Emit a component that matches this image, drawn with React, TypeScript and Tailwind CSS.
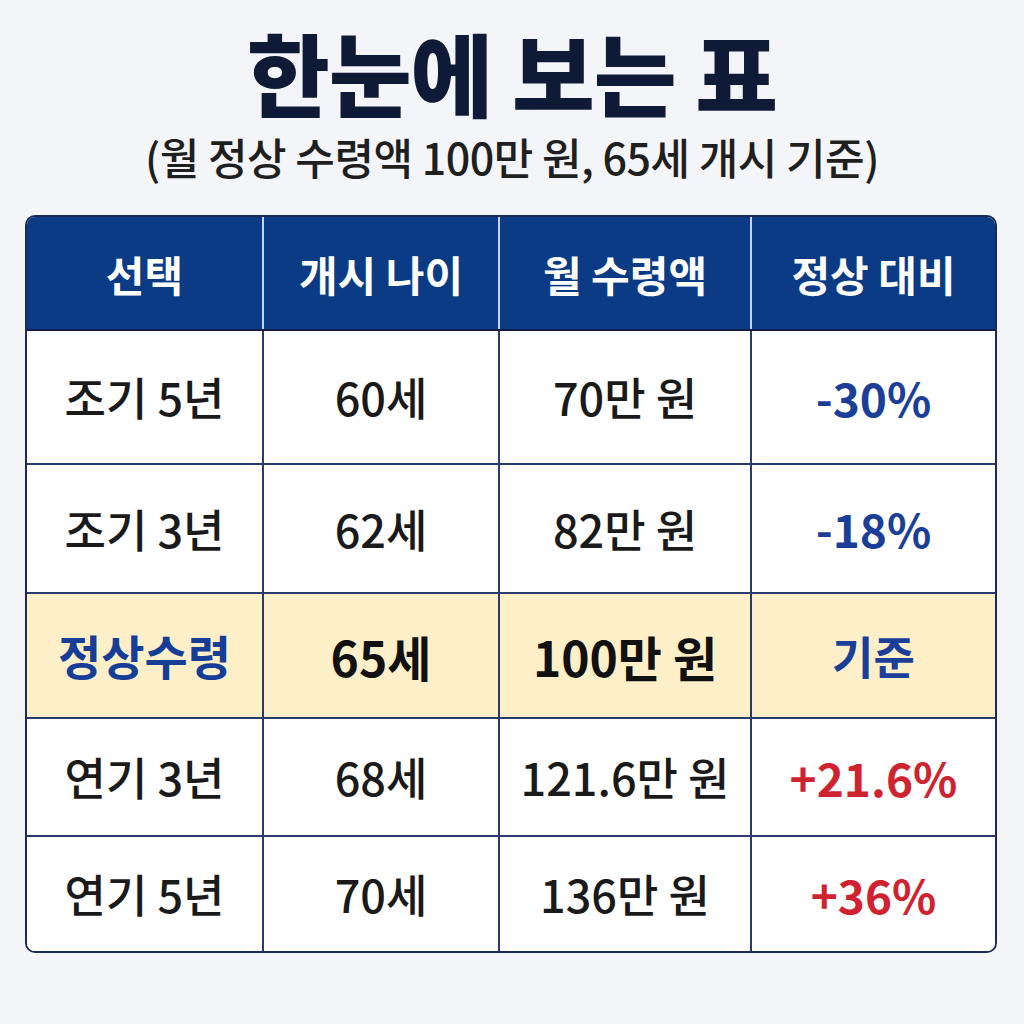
import React from "react";

const FONT = { fontFamily: '"Noto Sans CJK KR", "Noto Sans", sans-serif' };

type Cell = { text: string; cls: string };
type Row = { h: string; bg: string; cells: Cell[] };

const body = "text-[45px] font-medium text-[#1a1a1a]";
const blue = "text-[46px] font-bold text-[#1b3f98]";
const red = "text-[46px] font-bold text-[#cf2430]";

const rows: Row[] = [
  {
    h: "h-[132px]",
    bg: "bg-white",
    cells: [
      { text: "조기 5년", cls: body },
      { text: "60세", cls: body },
      { text: "70만 원", cls: body },
      { text: "-30%", cls: blue },
    ],
  },
  {
    h: "h-[129px]",
    bg: "bg-white",
    cells: [
      { text: "조기 3년", cls: body },
      { text: "62세", cls: body },
      { text: "82만 원", cls: body },
      { text: "-18%", cls: blue },
    ],
  },
  {
    h: "h-[125px]",
    bg: "bg-[#fdf0c9]",
    cells: [
      { text: "정상수령", cls: "text-[47px] font-bold text-[#163e96]" },
      { text: "65세", cls: "text-[48px] font-bold text-[#111111]" },
      { text: "100만 원", cls: "text-[48px] font-bold text-[#111111]" },
      { text: "기준", cls: "text-[45px] font-bold text-[#1b3f98]" },
    ],
  },
  {
    h: "h-[118px]",
    bg: "bg-white",
    cells: [
      { text: "연기 3년", cls: body },
      { text: "68세", cls: body },
      { text: "121.6만 원", cls: body },
      { text: "+21.6%", cls: red },
    ],
  },
  {
    h: "h-[116px]",
    bg: "bg-white",
    cells: [
      { text: "연기 5년", cls: body },
      { text: "70세", cls: body },
      { text: "136만 원", cls: body },
      { text: "+36%", cls: red },
    ],
  },
];

const headers = ["선택", "개시 나이", "월 수령액", "정상 대비"];
const cols = "grid grid-cols-[235px_236px_252px_245px]";

export default function App() {
  return (
    <div className="w-[1024px] h-[1024px] bg-[#f4f5f8] overflow-hidden" style={FONT}>
      <div className="flex flex-col items-center">
        <h1 className="mt-[31px] text-[90px] leading-[80px] font-black text-[#0e1a36] tracking-[-1px]">
          한눈에 보는 표
        </h1>
        <p className="mt-[21px] text-[43px] leading-[48px] font-medium text-[#1f1f1f] tracking-[-0.5px]">
          (월 정상 수령액 100만 원, 65세 개시 기준)
        </p>
      </div>
      <div className="ml-[25px] mt-[35px] w-[972px] border-2 border-[#1c2a58] rounded-[10px] overflow-hidden">
        <div className={`${cols} h-[114px] bg-[#0b3b84] border-b-2 border-[#0f1f4a]`}>
          {headers.map((h, i) => (
            <div
              key={h}
              className={`flex items-center justify-center text-[42px] font-bold text-white ${
                i > 0 ? "border-l-2 border-[#c9d2e6]" : ""
              }`}
            >
              {h}
            </div>
          ))}
        </div>
        {rows.map((r, ri) => (
          <div
            key={ri}
            className={`${cols} ${r.h} ${r.bg} ${ri > 0 ? "border-t-2 border-[#2a3a6e]" : ""}`}
          >
            {r.cells.map((c, ci) => (
              <div
                key={ci}
                className={`flex items-center justify-center ${c.cls} ${
                  ci > 0 ? "border-l-2 border-[#2a3a6e]" : ""
                }`}
              >
                {c.text}
              </div>
            ))}
          </div>
        ))}
      </div>
    </div>
  );
}
